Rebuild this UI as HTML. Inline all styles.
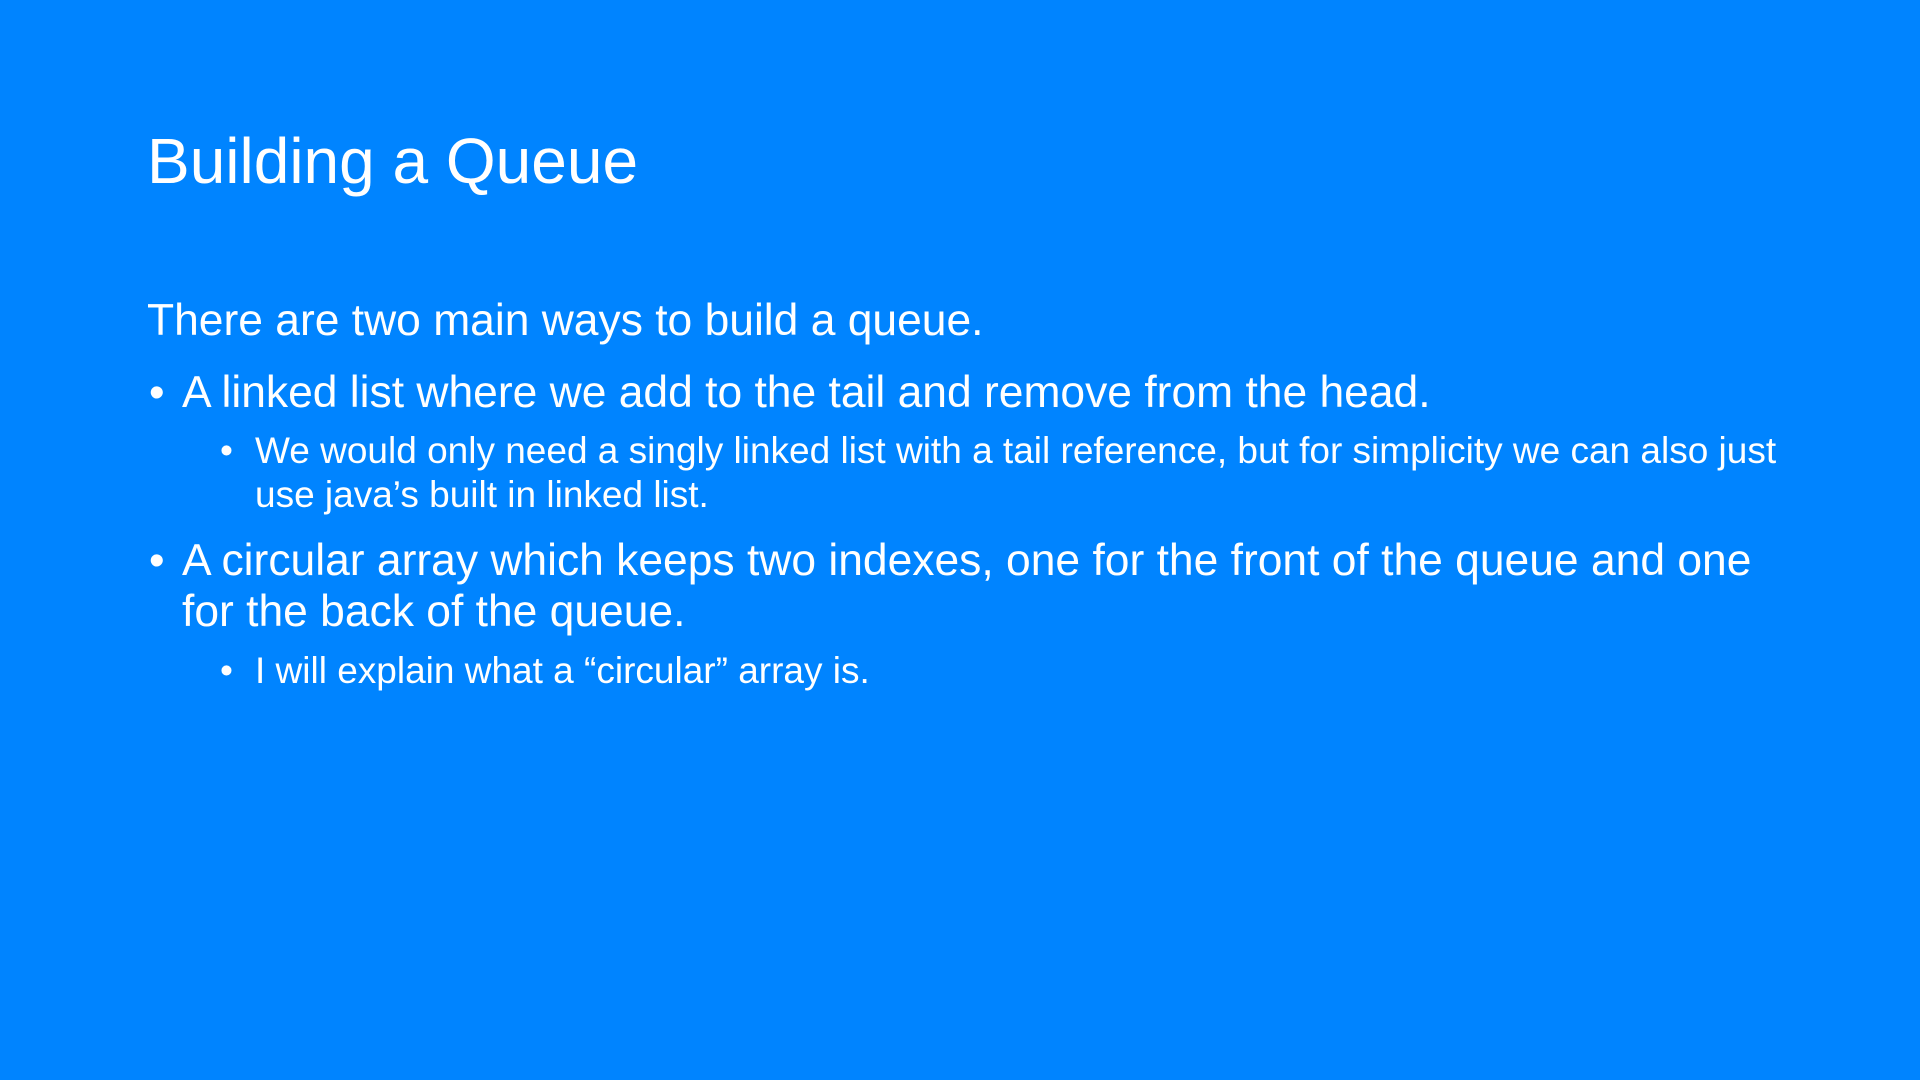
<!DOCTYPE html>
<html><head><meta charset="utf-8"><style>
html,body{margin:0;padding:0}
body{width:1920px;height:1080px;background:#0084ff;position:relative;overflow:hidden;color:#fff;font-family:"Liberation Sans",sans-serif}
.l{position:absolute;white-space:nowrap;line-height:1.149}
.t{font-size:64px;left:147px;top:125px}
.b{font-size:44.4px}
.s{font-size:37px}
</style></head><body>
<div class="l t">Building a Queue</div>
<div class="l b" style="left:147px;top:295px">There are two main ways to build a queue.</div>
<div class="l b" style="left:149px;top:367px">•</div>
<div class="l b" style="left:182px;top:367px">A linked list where we add to the tail and remove from the head.</div>
<div class="l s" style="left:220px;top:430px">•</div>
<div class="l s" style="left:255px;top:430px">We would only need a singly linked list with a tail reference, but for simplicity we can also just</div>
<div class="l s" style="left:255px;top:474px">use java’s built in linked list.</div>
<div class="l b" style="left:149px;top:535px">•</div>
<div class="l b" style="left:182px;top:535px">A circular array which keeps two indexes, one for the front of the queue and one</div>
<div class="l b" style="left:182px;top:586px">for the back of the queue.</div>
<div class="l s" style="left:220px;top:650px">•</div>
<div class="l s" style="left:255px;top:650px">I will explain what a “circular” array is.</div>
</body></html>
